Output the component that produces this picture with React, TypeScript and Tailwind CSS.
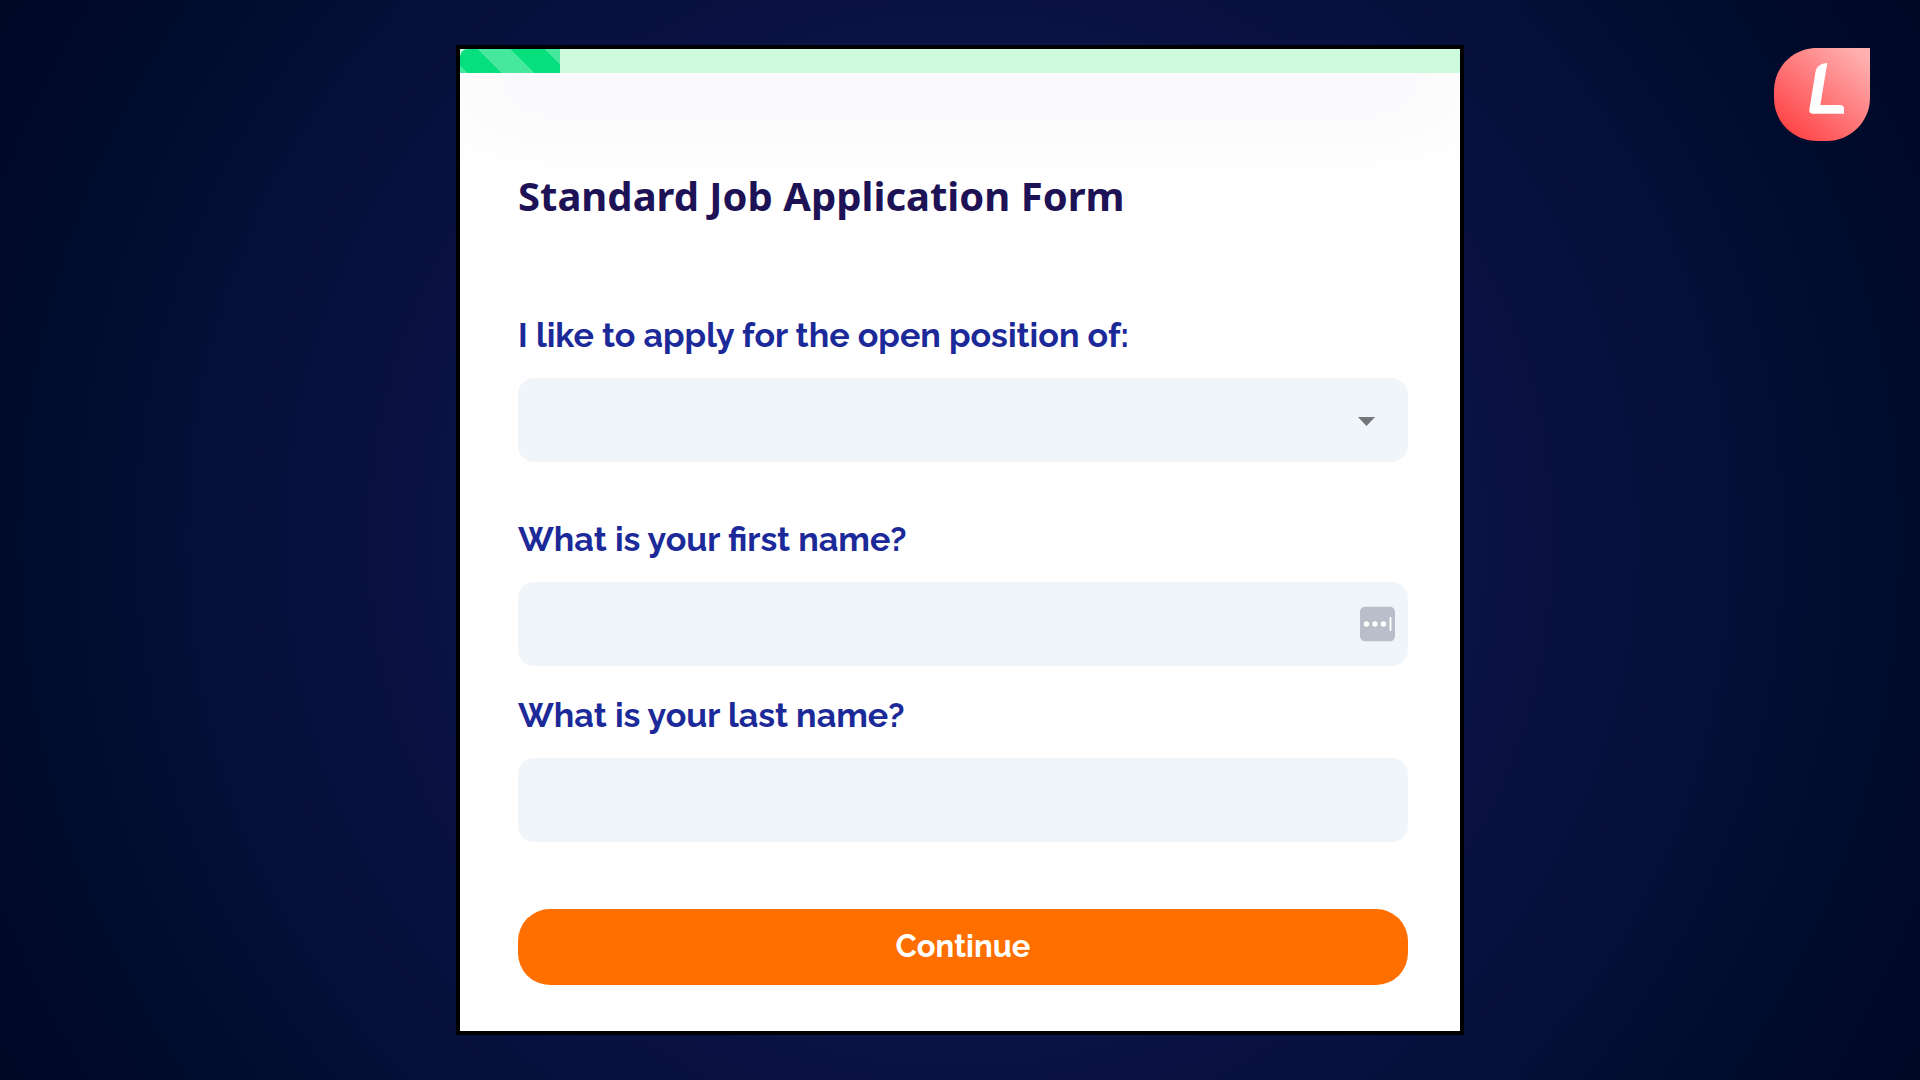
import { useId, useState } from 'react'
import type { ReactNode } from 'react'

const FIELD = 'block w-full h-21 rounded-2xl bg-[#f0f5fa] px-6 text-2xl text-[#1c2a99] outline-none focus:ring-2 focus:ring-[#1c2a99]/30'

const POSITIONS = ['Designer', 'Developer', 'Project Manager', 'Sales Representative']

function Logo() {
  return (
    <svg viewBox="0 0 96 94" className="absolute top-12 right-[50px] w-24" role="img" aria-label="Logo">
      <defs>
        <linearGradient id="drop" x1="0.15" y1="0.9" x2="0.9" y2="0.05">
          <stop offset="0" stopColor="#ff4548" />
          <stop offset="1" stopColor="#ffb0b0" />
        </linearGradient>
      </defs>
      <path d="M96 0V50C96 74 76 93 53 93H43C19 93 0 74 0 50V43C0 19 19 0 43 0Z" fill="url(#drop)" />
      <path d="M53.3 15L46.3 57H66C68.500 57 70 58.500 70 61V65.700H38.500C36.300 65.700 35 64 35.300 61.800L41.500 24C42.500 18.500 47 15 53.300 15Z" fill="#fff" />
    </svg>
  )
}

function ProgressBar({ value }: { value: number }) {
  return (
    <div
      role="progressbar"
      aria-valuenow={value}
      aria-valuemin={0}
      aria-valuemax={100}
      className="h-6 bg-[#cdfadd] shadow-[0_24px_100px_rgba(30,40,110,0.12)]"
    >
      <div
        className="h-full rounded-tl-lg bg-[#05df7c] bg-[repeating-linear-gradient(45deg,#45e89d_0px,#45e89d_5px,#05df7c_5px,#05df7c_29px,#45e89d_29px,#45e89d_48px)]"
        style={{ width: `${value}%` }}
      />
    </div>
  )
}

interface FieldProps {
  label: string
  className?: string
  children: (id: string) => ReactNode
}

function Field({ label, className, children }: FieldProps) {
  const id = useId()
  return (
    <div className={className}>
      <label htmlFor={id} className="mb-[23px] block text-[34px] leading-10 font-bold text-[#1c2a99]">
        {label}
      </label>
      <div className="relative">{children(id)}</div>
    </div>
  )
}

export default function App() {
  const [position, setPosition] = useState('')
  const [firstName, setFirstName] = useState('')
  const [lastName, setLastName] = useState('')

  return (
    <div className="relative flex min-h-screen items-center justify-center bg-[radial-gradient(circle_farthest-corner,#111654_0%,#0b1245_46%,#040e34_75%,#000a2a_88%,#000826_100%)] py-10 font-['Raleway','Lato',sans-serif]">
      <Logo />

      <main className="w-full max-w-[1008px] overflow-hidden border-4 border-black bg-white">
        <ProgressBar value={10} />

        <form onSubmit={e => e.preventDefault()} className="pt-[95px] pr-13 pb-[46px] pl-[58px]">
          <h1 className="font-['Noto_Sans',sans-serif] text-[40px] leading-14 font-bold text-[#1e1256]">
            Standard Job Application Form
          </h1>

          <Field label="I like to apply for the open position of:" className="mt-[91px]">
            {id => (
              <>
                <select id={id} value={position} onChange={e => setPosition(e.target.value)} className={`${FIELD} appearance-none`}>
                  <option value=""></option>
                  {POSITIONS.map(p => <option key={p} value={p}>{p}</option>)}
                </select>
                <svg viewBox="0 0 17 12" className="pointer-events-none absolute top-1/2 right-[33px] w-[17px] -translate-y-1/2">
                  <path d="M0 3H17L8.500 12Z" fill="#727679" />
                </svg>
              </>
            )}
          </Field>

          <Field label="What is your first name?" className="mt-[57px]">
            {id => (
              <>
                <input id={id} type="text" value={firstName} onChange={e => setFirstName(e.target.value)} className={FIELD} />
                {/* password manager badge */}
                <svg viewBox="0 0 35 35" className="pointer-events-none absolute top-1/2 right-[13px] w-[35px] -translate-y-1/2">
                  <rect width="35" height="35" rx="5.500" fill="#b8bfca" />
                  <circle cx="6.500" cy="17.500" r="2.700" fill="#fff" />
                  <circle cx="15" cy="17.500" r="2.700" fill="#fff" />
                  <circle cx="23.500" cy="17.500" r="2.700" fill="#fff" />
                  <rect x="29.600" y="10.500" width="1.800" height="14" fill="#fff" />
                </svg>
              </>
            )}
          </Field>

          <Field label="What is your last name?" className="mt-[29px]">
            {id => <input id={id} type="text" value={lastName} onChange={e => setLastName(e.target.value)} className={FIELD} />}
          </Field>

          <button type="submit" className="mt-[67px] flex h-19 w-full items-center justify-center rounded-[32px] bg-[#ff6f00] pb-0.5 text-[31px] leading-10 font-bold text-white hover:bg-[#f06800]">
            Continue
          </button>
        </form>
      </main>
    </div>
  )
}
